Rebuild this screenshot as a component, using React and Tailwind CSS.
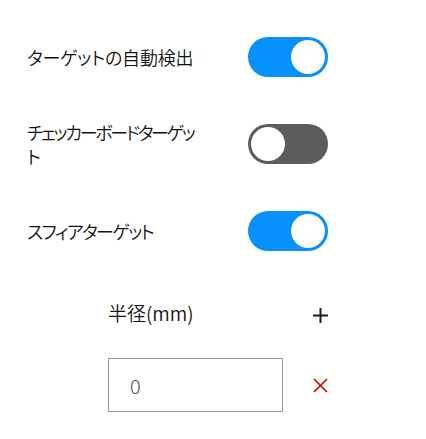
import React, { useState } from "react";

const font = { fontFamily: "'Noto Sans CJK JP', 'Noto Sans', sans-serif" };

const Toggle = ({ on, onChange }) => (
  <button
    type="button"
    onClick={() => onChange(!on)}
    className={`flex h-[40px] w-[80px] shrink-0 items-center rounded-full p-[3px] ${on ? "justify-end bg-[#0791fc]" : "justify-start bg-[#5c5c5c]"}`}
  >
    <span className="block h-[34px] w-[34px] rounded-full bg-white" />
  </button>
);

export default function App() {
  const [auto, setAuto] = useState(true);
  const [checker, setChecker] = useState(false);
  const [sphere, setSphere] = useState(true);
  const [radius, setRadius] = useState("0");

  const rows = [
    { label: "ターゲットの自動検出", track: "tracking-[-0.2px]", on: auto, set: setAuto },
    { label: <>チェッカーボードターゲッ<br />ト</>, track: "tracking-[-2.3px]", on: checker, set: setChecker },
    { label: "スフィアターゲット", track: "tracking-[-1.6px]", on: sphere, set: setSphere },
  ];

  return (
    <div className="min-h-[439px] w-[426px] bg-white text-[#111]" style={font}>
      <div className="w-[328px] pl-[27px] pt-[37px] [font-feature-settings:'palt']">
        <div className="flex flex-col gap-[47px]">
          {rows.map((r, i) => (
            <div key={i} className="flex h-[40px] items-center justify-between">
              <div className={`whitespace-nowrap text-[18px] font-[350] leading-[24px] ${r.track}`}>{r.label}</div>
              <Toggle on={r.on} onChange={r.set} />
            </div>
          ))}
        </div>

        <div className="ml-[81px] mt-[50px]">
          <div className="flex h-[24px] items-center justify-between">
            <span className="text-[19px] font-[350] leading-[24px]">半径(mm)</span>
            <button type="button" className="flex h-[24px] w-[15px] items-center justify-center pt-[4px]">
              <svg width="15" height="15" viewBox="0 0 15 15">
                <path d="M7.5 0V15M0 7.5H15" stroke="#1a1a1a" strokeWidth="2" />
              </svg>
            </button>
          </div>

          <div className="mt-[33px] flex items-center justify-between">
            <input
              value={radius}
              onChange={(e) => setRadius(e.target.value)}
              className="h-[54px] w-[175px] border border-[#999] pl-[21px] text-[20px] font-light text-[#555] outline-none"
              style={font}
            />
            <button type="button" className="flex h-[15px] w-[15px] items-center justify-center">
              <svg width="15" height="15" viewBox="0 0 15 15">
                <path d="M1 1L14 14M14 1L1 14" stroke="#cc0000" strokeWidth="1.6" />
              </svg>
            </button>
          </div>
        </div>
      </div>
    </div>
  );
}
